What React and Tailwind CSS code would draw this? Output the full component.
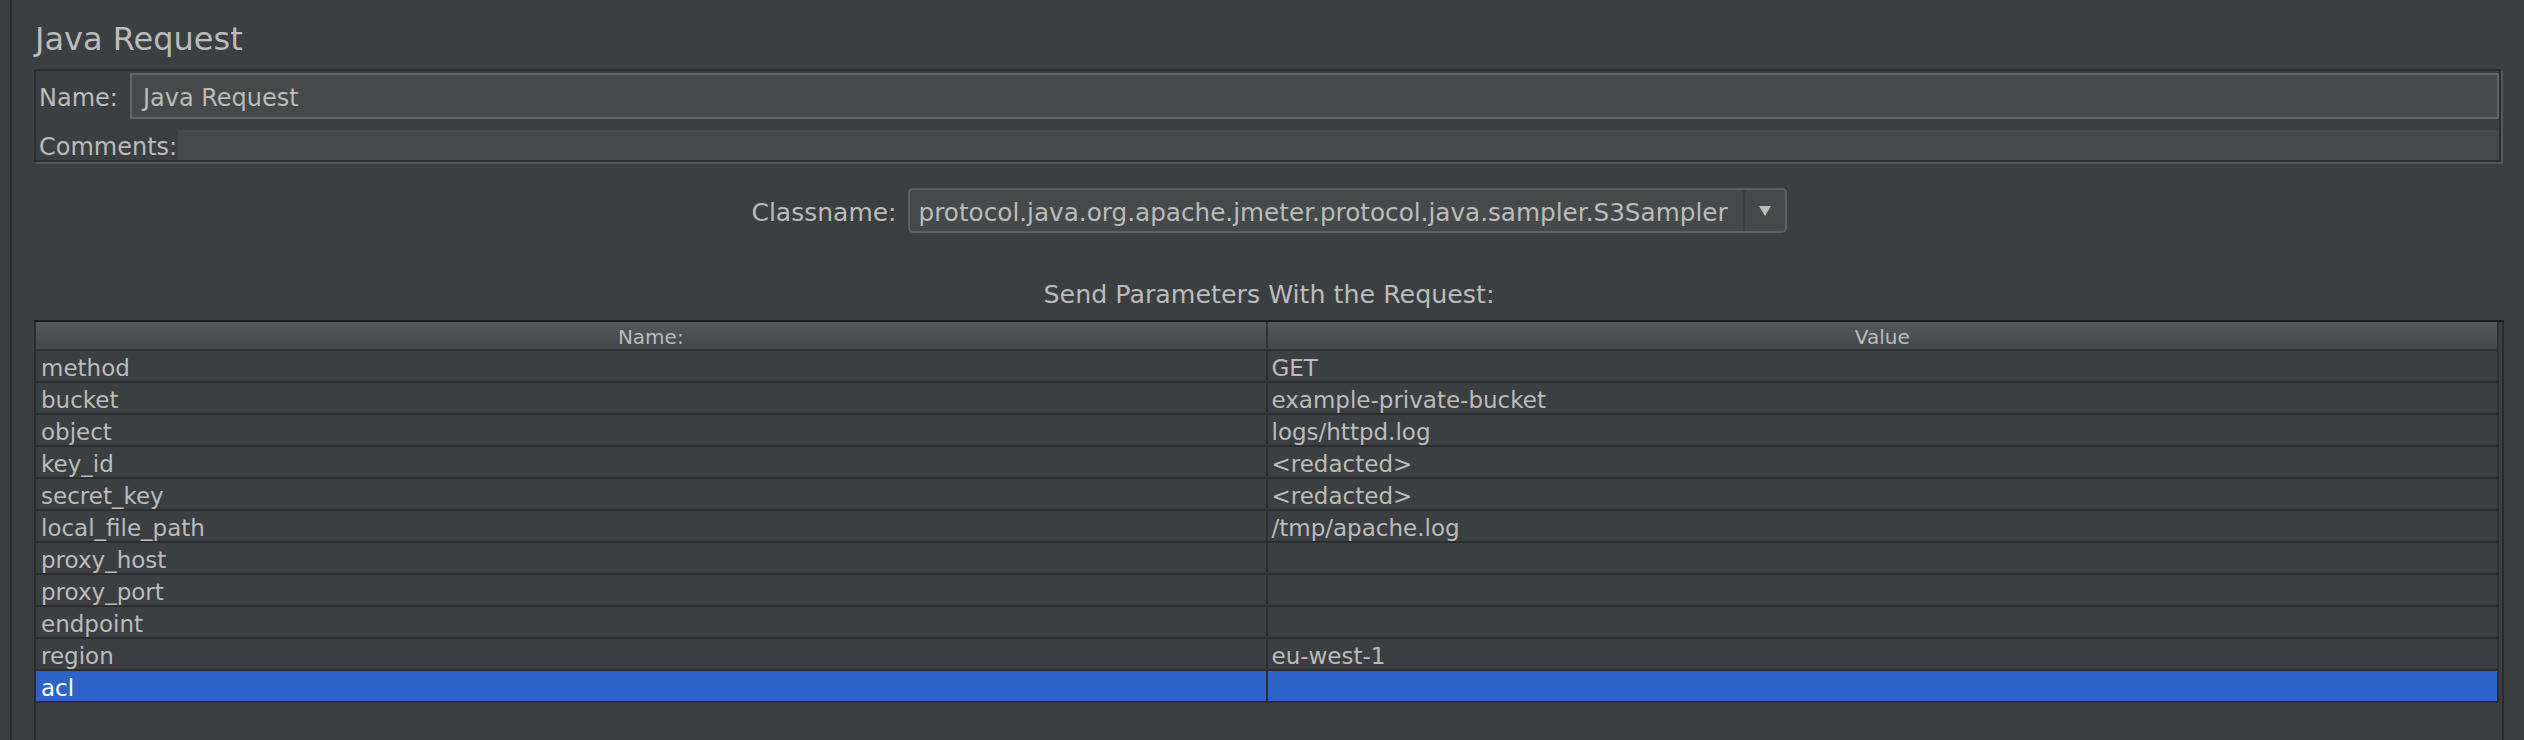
const params = [
  ['method', 'GET'],
  ['bucket', 'example-private-bucket'],
  ['object', 'logs/httpd.log'],
  ['key_id', '<redacted>'],
  ['secret_key', '<redacted>'],
  ['local_file_path', '/tmp/apache.log'],
  ['proxy_host', ''],
  ['proxy_port', ''],
  ['endpoint', ''],
  ['region', 'eu-west-1'],
  ['acl', ''],
];

function ParamRow({ name, value, selected }) {
  const bg = selected ? 'bg-[#2d63c8] text-white' : 'text-[#bbbbbb]';
  return (
    <div className={`grid h-[32px] shrink-0 grid-cols-2 border-b-2 border-[#2c2d2e] ${bg}`}>
      <div className="border-r-2 border-[#2c2d2e] pl-[5px] pt-[4px] text-[23px] leading-[26px] whitespace-nowrap">{name}</div>
      <div className="border-r-2 border-[#2c2d2e] pl-[4px] pt-[4px] text-[23px] leading-[26px] whitespace-nowrap">{value}</div>
    </div>
  );
}

export default function App() {
  return (
    <div className="flex h-[740px] w-full overflow-hidden bg-[#3c3f41] font-['DejaVu_Sans',sans-serif] text-[#bbbbbb]">
      <div className="w-[10px] shrink-0" />
      <div className="flex min-w-0 flex-1 flex-col border-l-2 border-[#2b2b2b] pl-[22px] pr-[20px]">
        <h1 className="mt-[23px] pl-[1px] text-[32px] leading-none">Java Request</h1>

        {/* name / comments panel */}
        <div className="mr-[3px] mt-[14px] border-2 border-[#2b2d2f] shadow-[2px_2px_0_#55585b]">
          <div className="flex h-[48px] items-start gap-[12px] pl-[3px] pt-[2px]">
            <span className="pt-[13px] text-[24px] leading-[24px]">Name:</span>
            <div className="h-[46px] flex-1 border-2 border-[#616466] bg-[#45494a] pl-[11px] pt-[11px] text-[24px] leading-[24px]">
              Java Request
            </div>
          </div>
          <div className="mt-[11px] flex h-[30px] items-start pl-[3px]">
            <span className="pt-[5px] text-[24px] leading-[24px]">Comments:</span>
            <div className="ml-[1px] h-[30px] flex-1 bg-[#45494a]" />
          </div>
        </div>

        {/* classname combo */}
        <div className="mt-[26px] flex h-[45px] items-start justify-center gap-[11px]">
          <span className="pt-[13px] text-[25px] leading-[24px]">Classname:</span>
          <div className="flex h-[45px] w-[879px] rounded-[5px] border-2 border-[#5e6163] bg-[#45494a]">
            <div className="min-w-0 flex-1 overflow-hidden whitespace-nowrap pl-[9px] pt-[11px] text-[24.7px] leading-[24px]">
              protocol.java.org.apache.jmeter.protocol.java.sampler.S3Sampler
            </div>
            <div className="flex w-[42px] items-center justify-center border-l-2 border-[#3a3d3f]">
              <svg width="12" height="10" viewBox="0 0 12 10">
                <path d="M0 0h12L6 10z" fill="#bbbbbb" />
              </svg>
            </div>
          </div>
        </div>

        <div className="mt-[50px] h-[24px] text-center text-[25.3px] leading-[24px]">Send Parameters With the Request:</div>

        {/* parameters table */}
        <div className="mt-[13px] flex min-h-0 flex-1 flex-col border-x-2 border-t-2 border-x-[#2b2b2b] border-t-[#1c1d1e]">
          <div className="mr-[3px] flex flex-col">
            <div className="grid h-[29px] shrink-0 grid-cols-2 border-b-2 border-[#2f3133] bg-linear-to-b from-[#55595c] to-[#44474a]">
              <div className="border-r-2 border-[#2f3133] pt-[4px] text-center text-[20px] leading-[23px]">Name:</div>
              <div className="border-r-2 border-[#2f3133] pt-[4px] text-center text-[20px] leading-[23px]">Value</div>
            </div>
            {params.map(([name, value]) => (
              <ParamRow key={name} name={name} value={value} selected={name === 'acl'} />
            ))}
          </div>
        </div>
      </div>
    </div>
  );
}
